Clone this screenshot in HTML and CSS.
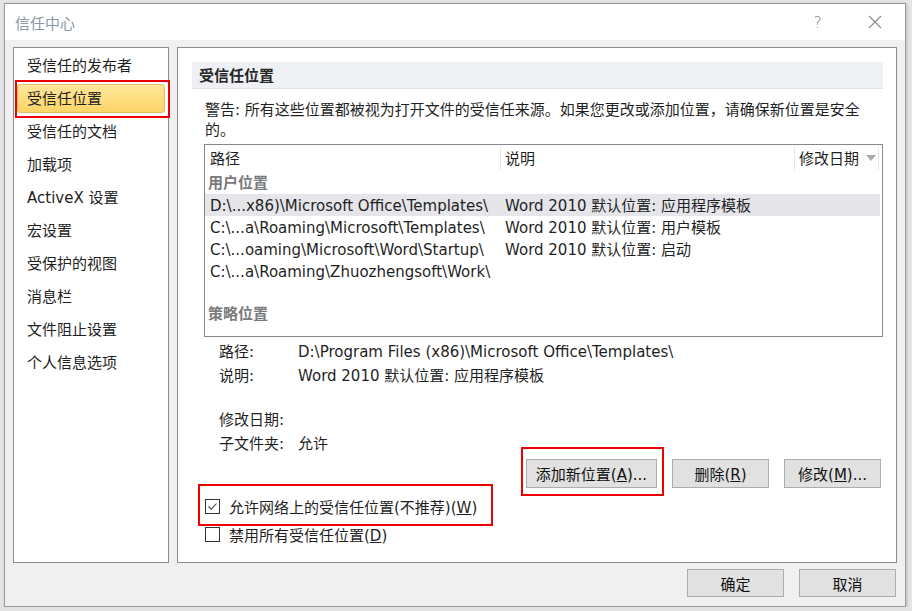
FILE: index.html
```html
<!DOCTYPE html>
<html lang="zh-CN">

<head>
    <meta charset="UTF-8">
    <title>信任中心</title>
    <link rel="stylesheet" href="styles.css">
</head>

<body>
    <div class="dialog">
        <div class="titlebar">
            <span class="title">信任中心</span>
            <span class="help">?</span>
            <span class="close">
                <svg width="14" height="14" viewBox="0 0 14 14">
                    <path d="M1 1 L13 13 M13 1 L1 13" stroke="#8a8a8a" stroke-width="1.1" fill="none" />
                </svg>
            </span>
        </div>

        <div class="main">
            <ul class="nav">
                <li>受信任的发布者</li>
                <li class="current marked">受信任位置</li>
                <li>受信任的文档</li>
                <li>加载项</li>
                <li>ActiveX 设置</li>
                <li>宏设置</li>
                <li>受保护的视图</li>
                <li>消息栏</li>
                <li>文件阻止设置</li>
                <li>个人信息选项</li>
            </ul>

            <div class="pane">
                <div class="pane-head">受信任位置</div>
                <p class="warning">警告: 所有这些位置都被视为打开文件的受信任来源。如果您更改或添加位置，请确保新位置是安全的。</p>

                <div class="list">
                    <div class="list-head">
                        <span class="col-path">路径</span>
                        <span class="col-desc">说明</span>
                        <span class="col-date">修改日期
                            <svg width="10" height="6" viewBox="0 0 10 6">
                                <path d="M0 0 H10 L5 6 Z" fill="#a9aca4" />
                            </svg>
                        </span>
                    </div>
                    <div class="group">用户位置</div>
                    <div class="row selected">
                        <span class="col-path">D:\...x86)\Microsoft Office\Templates\</span>
                        <span class="col-desc">Word 2010 默认位置: 应用程序模板</span>
                    </div>
                    <div class="row">
                        <span class="col-path">C:\...a\Roaming\Microsoft\Templates\</span>
                        <span class="col-desc">Word 2010 默认位置: 用户模板</span>
                    </div>
                    <div class="row">
                        <span class="col-path">C:\...oaming\Microsoft\Word\Startup\</span>
                        <span class="col-desc">Word 2010 默认位置: 启动</span>
                    </div>
                    <div class="row">
                        <span class="col-path">C:\...a\Roaming\Zhuozhengsoft\Work\</span>
                        <span class="col-desc"></span>
                    </div>
                    <div class="group policy">策略位置</div>
                </div>

                <div class="details">
                    <span>路径:</span><span>D:\Program Files (x86)\Microsoft Office\Templates\</span>
                    <span>说明:</span><span>Word 2010 默认位置: 应用程序模板</span>
                    <span class="spacer"></span>
                    <span>修改日期:</span><span></span>
                    <span>子文件夹:</span><span>允许</span>
                </div>

                <div class="actions">
                    <button class="btn wide marked">添加新位置(<u>A</u>)...</button>
                    <button class="btn">删除(<u>R</u>)</button>
                    <button class="btn">修改(<u>M</u>)...</button>
                </div>

                <div class="checks">
                    <label class="check marked">
                        <span class="box">
                            <svg width="13" height="13" viewBox="0 0 13 13">
                                <path d="M2.5 6.5 L5.2 9.2 L10.5 3.5" stroke="#444" stroke-width="1.1" fill="none" />
                            </svg>
                        </span>
                        <span>允许网络上的受信任位置(不推荐)(<u>W</u>)</span>
                    </label>
                    <label class="check">
                        <span class="box"></span>
                        <span>禁用所有受信任位置(<u>D</u>)</span>
                    </label>
                </div>
            </div>
        </div>

        <div class="footer">
            <button class="btn">确定</button>
            <button class="btn">取消</button>
        </div>
    </div>
</body>

</html>
```

FILE: styles.css
```css
body {
    margin: 0;
    padding: 3px 0 0 4px;
    background-color: #e4e4e4;
    font-family: "DejaVu Sans", "Noto Sans CJK SC", sans-serif;
    font-size: 15px;
    color: #1f1f1f;
}

.dialog {
    width: 900px;
    height: 602px;
    border: 1px solid #9a9a9a;
    background-color: #f0f0f0;
    box-shadow: 1px 1px 3px rgba(0, 0, 0, 0.2);
    display: flex;
    flex-direction: column;
}

.titlebar {
    height: 36px;
    background-color: #fff;
    display: flex;
    align-items: center;
    padding-left: 10px;
}

.title {
    color: #8c98a4;
    flex: 1;
}

.help {
    color: #8a8a8a;
    font-size: 16px;
    font-weight: 300;
    margin-right: 46px;
}

.close {
    display: flex;
    margin-right: 23px;
}

.main {
    display: flex;
    gap: 8px;
    padding: 7px 8px 0 8px;
    height: 516px;
}

/* left navigation */
.nav {
    list-style: none;
    margin: 0;
    padding: 3px 0 0 0;
    width: 154px;
    background-color: #fff;
    border: 1px solid #8b8b8b;
}

.nav li {
    height: 29px;
    line-height: 31px;
    margin: 0 3px 4px 3px;
    padding-left: 10px;
    box-sizing: border-box;
}

.nav li.current {
    background: linear-gradient(#fee79b, #fdd567);
    border: 1px solid #e2bf62;
    border-radius: 3px;
    padding-left: 9px;
    line-height: 29px;
}

.marked {
    position: relative;
}

.marked::after {
    content: "";
    position: absolute;
    border: 2px solid #ee0000;
    pointer-events: none;
}

.nav li.marked::after {
    top: -5px;
    left: -3px;
    right: -6px;
    bottom: -6px;
}

/* right pane */
.pane {
    flex: 1;
    background-color: #fff;
    border: 1px solid #8b8b8b;
    padding: 14px 13px 0 14px;
    display: flex;
    flex-direction: column;
}

.pane-head {
    height: 27px;
    line-height: 28px;
    background-color: #eef0f4;
    border-bottom: 1px solid #e0e3e8;
    box-sizing: border-box;
    padding-left: 7px;
    font-weight: bold;
    color: #262626;
}

.warning {
    margin: 11px 0 4px 13px;
    line-height: 20px;
}

.list {
    margin-left: 12px;
    height: 193px;
    box-sizing: border-box;
    border: 1px solid #828790;
    padding-right: 2px;
}

.list-head,
.row {
    display: flex;
}

.list-head {
    height: 27px;
}

.list-head span {
    border-right: 1px solid #e5e5e5;
    margin: 2px 0;
    line-height: 24px;
}

.col-path {
    width: 296px;
    padding-left: 5px;
    box-sizing: border-box;
    white-space: nowrap;
}

.col-desc {
    width: 294px;
    padding-left: 4px;
    box-sizing: border-box;
    white-space: nowrap;
}

.col-date {
    width: 84px;
    padding-left: 4px;
    box-sizing: border-box;
    white-space: nowrap;
}

.col-date svg {
    margin-left: 2px;
    vertical-align: 3px;
}

.group {
    height: 22px;
    line-height: 23px;
    padding-left: 3px;
    color: #7a7a7a;
    font-weight: bold;
}

.group.policy {
    margin-top: 21px;
}

.row {
    height: 22px;
    line-height: 24px;
}

.row.selected {
    background-color: #e5e5ea;
}

.details {
    display: grid;
    grid-template-columns: 79px auto;
    line-height: 25px;
    grid-auto-rows: 24px;
    margin: 3px 0 0 27px;
}

.details .spacer {
    grid-column: 1 / 3;
    height: 20px;
}

.details {
    grid-template-rows: 24px 24px 20px 24px 24px;
}

.actions {
    display: flex;
    justify-content: flex-end;
    gap: 15px;
    margin: 3px 2px 0 0;
}

.btn {
    font-family: inherit;
    font-size: 15px;
    color: #111;
    width: 97px;
    height: 29px;
    padding: 0;
    background-color: #e1e1e1;
    border: 1px solid #adadad;
}

.btn.wide {
    width: 131px;
}

.actions .btn.marked::after {
    top: -13px;
    left: -6px;
    right: -8px;
    bottom: -9px;
}

.checks {
    display: flex;
    flex-direction: column;
    gap: 6px;
    margin: 7px 0 0 13px;
    align-items: flex-start;
}

.check {
    display: flex;
    align-items: center;
    height: 22px;
    gap: 9px;
}

.check.marked::after {
    top: -11px;
    left: -7px;
    right: -16px;
    bottom: -9px;
}

.box {
    width: 13px;
    height: 13px;
    border: 1px solid #333;
    background-color: #fff;
    display: flex;
}

.footer {
    flex: 1;
    display: flex;
    justify-content: flex-end;
    gap: 15px;
    padding: 6px 9px 0 0;
}

.footer .btn {
    height: 28px;
}
```
